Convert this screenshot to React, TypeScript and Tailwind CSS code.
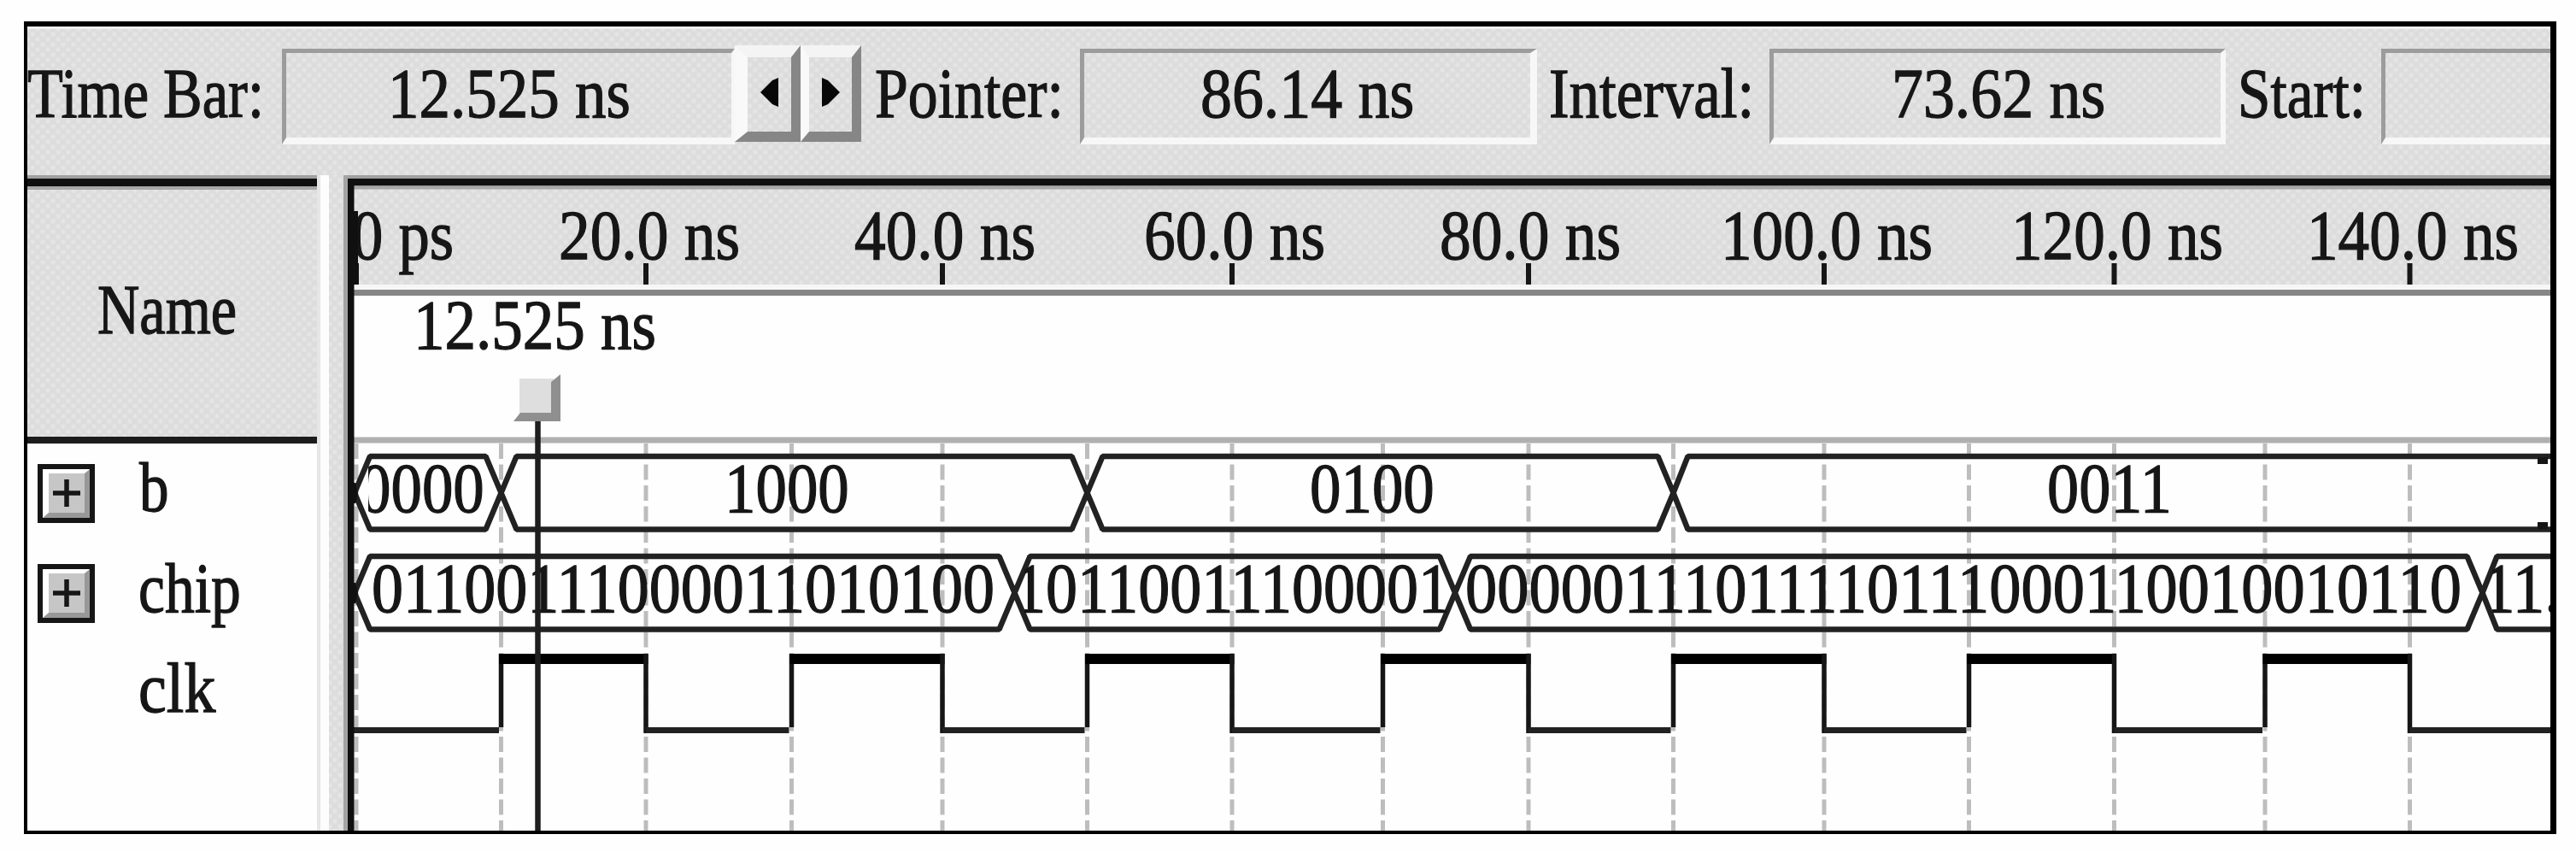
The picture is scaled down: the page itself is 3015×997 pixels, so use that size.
import React, { useLayoutEffect, useRef, useState } from "react";

const INK = "#161616";
const DIGIT = 36.45;

const GRID = [
  417, 586.5, 756, 926.5, 1103, 1272.5, 1442, 1618.5, 1789, 1958.5, 2135,
  2304.5, 2474.5, 2651, 2820.5,
];

const RULER = [
  { label: "0 ps", x: 412, width: 119, tick: 417 },
  { label: "20.0 ns", x: 654, width: 212, tick: 756 },
  { label: "40.0 ns", x: 1000, width: 212, tick: 1103 },
  { label: "60.0 ns", x: 1339, width: 212, tick: 1442 },
  { label: "80.0 ns", x: 1685, width: 212, tick: 1789 },
  { label: "100.0 ns", x: 2014, width: 248, tick: 2135 },
  { label: "120.0 ns", x: 2354, width: 248, tick: 2474.5 },
  { label: "140.0 ns", x: 2700, width: 248, tick: 2820.5 },
];

const B_EDGES = [586.5, 1272.5, 1958.5];
const B_VALUES = [
  { text: "0000", x: 421 },
  { text: "1000", x: 848 },
  { text: "0100", x: 1533 },
  { text: "0011", x: 2396 },
];

const CHIP_EDGES = [1187.5, 1703, 2905.5];
const CHIP_VALUES = [
  { text: "01100111000011010100", x: 435, width: 729 },
  { text: "10110011100001", x: 1187, width: 510 },
  { text: "00000111011110111000110010010110", x: 1715, width: 1166 },
  { text: "11.", x: 2906, width: 91 },
];

const dither =
  "bg-[#dcdcdc] bg-[radial-gradient(circle,#e6e6e6_1px,transparent_4px),radial-gradient(circle,#e6e6e6_1px,transparent_4px)] bg-[size:12px_12px] bg-[position:0_0,6px_6px]";

// Text squeezed horizontally to the given width
const Fit: React.FC<{ width: number; children: string }> = ({
  width,
  children,
}) => {
  const ref = useRef<HTMLSpanElement>(null);
  const [scale, setScale] = useState(1);

  useLayoutEffect(() => {
    if (ref.current) setScale(width / ref.current.offsetWidth);
  }, [width, children]);

  return (
    <div className="shrink-0 h-[84px]" style={{ width }}>
      <span
        ref={ref}
        className="inline-block origin-left whitespace-nowrap text-[83px] leading-[84px] text-[#161616] [-webkit-text-stroke:1.3px_#161616]"
        style={{ transform: `scaleX(${scale})` }}
      >
        {children}
      </span>
    </div>
  );
};

const Field: React.FC<{ children?: React.ReactNode; className: string }> = ({
  children,
  className,
}) => (
  <div
    className={`shrink-0 h-[112px] border-t-[5px] border-l-[5px] border-b-[8px] border-t-[#9c9c9c] border-l-[#9c9c9c] border-b-[#f7f7f7] border-r-[#f7f7f7] flex items-start pt-[5px] ${className}`}
  >
    {children}
  </div>
);

const StepButton: React.FC<{ dir: "left" | "right"; className: string }> = ({
  dir,
  className,
}) => (
  <button
    className={`shrink-0 h-[113px] border-t-[14px] border-b-[12px] border-r-[11px] border-t-[#f4f4f4] border-l-[#f9f9f9] border-r-[#868686] border-b-[#868686] flex justify-center pt-[24px] ${className}`}
  >
    <svg width="21" height="34" viewBox="0 0 21 34">
      <path
        d={dir === "left" ? "M21 0 L21 34 L14 31 L0 17 L14 3 Z" : "M0 0 L0 34 L7 31 L21 17 L7 3 Z"}
        fill="#080808"
      />
    </svg>
  </button>
);

const Expander: React.FC = () => (
  <button className="shrink-0 w-[67px] h-[69px] border-[6px] border-[#161616]">
    <span className="flex items-center justify-center w-full h-full bg-[#c6c6c6] border-t-[5px] border-l-[7px] border-b-[6px] border-r-[6px] border-t-white border-l-white border-b-[#989898] border-r-[#989898]">
      <svg width="32" height="32" viewBox="0 0 32 32">
        <path d="M0 16 H32 M16 0 V32" stroke={INK} strokeWidth="5.5" />
      </svg>
    </span>
  </button>
);

const PlotText: React.FC<{
  x: number;
  y: number;
  width: number;
  children: string;
}> = ({ x, y, width, children }) => (
  <text
    x={x}
    y={y}
    textLength={width}
    lengthAdjust="spacingAndGlyphs"
    fontSize="83"
    fill={INK}
    stroke={INK}
    strokeWidth="1.3"
  >
    {children}
  </text>
);

// Bus outline: rails between the edges and an X at every edge
const Bus: React.FC<{ top: number; bottom: number; edges: number[] }> = ({
  top,
  bottom,
  edges,
}) => {
  const mid = (top + bottom) / 2;
  const starts = [415, ...edges];
  const d = starts
    .map((s, i) => {
      const end = starts[i + 1];
      if (end === undefined) {
        return `M2990 ${top} H${s + 17} L${s} ${mid} L${s + 17} ${bottom} H2990`;
      }
      return `M${s} ${mid} L${s + 18} ${top} H${end - 18} L${end} ${mid} L${end - 18} ${bottom} H${s + 18} Z`;
    })
    .join(" ");
  return (
    <path d={d} fill="none" stroke="#222222" strokeWidth="6.5" strokeLinejoin="bevel" />
  );
};

const Plot: React.FC = () => {
  const edges = GRID.slice(1);
  return (
    <svg
      className="shrink-0 block"
      width="2578"
      height="767"
      viewBox="407 205 2578 767"
    >
      {/* time ruler */}
      {RULER.map((r) => (
        <g key={r.label}>
          <PlotText x={r.x} y={303} width={r.width}>
            {r.label}
          </PlotText>
          <rect x={r.tick - 3} y="308" width="6" height="25" fill={INK} />
        </g>
      ))}
      <rect x="407" y="333" width="2578" height="6" fill="#f6f6f6" />
      <rect x="407" y="346" width="2578" height="626" fill="#fefefe" />
      <rect x="407" y="339" width="2578" height="7" fill="#868686" />
      <rect x="407" y="511.5" width="2578" height="7" fill="#b0b0b0" />

      {/* grid */}
      {GRID.map((x) => (
        <line
          key={x}
          x1={x}
          x2={x}
          y1="519"
          y2="972"
          stroke="#bdbdbd"
          strokeWidth="5"
          strokeDasharray="18 6.5"
        />
      ))}

      {/* b */}
      <Bus top={534} bottom={619.5} edges={B_EDGES} />
      <clipPath id="bus-start">
        <rect x="431" y="530" width="2554" height="90" />
      </clipPath>
      <g clipPath="url(#bus-start)">
        {B_VALUES.map((v) => (
          <PlotText key={v.text} x={v.x} y={599} width={v.text.length * DIGIT}>
            {v.text}
          </PlotText>
        ))}
      </g>
      <rect x="2970" y="535" width="12" height="8" fill={INK} />
      <rect x="2970" y="611" width="12" height="8" fill={INK} />

      {/* chip */}
      <Bus top={651} bottom={736.5} edges={CHIP_EDGES} />
      <clipPath id="chip-values">
        <path d="M430 640 H1187 V740 H430 Z M1199 640 H2900 V740 H1199 Z M2917 640 H2985 V740 H2917 Z" />
      </clipPath>
      <g clipPath="url(#chip-values)">
        {CHIP_VALUES.map((v) => (
          <PlotText key={v.text} x={v.x} y={716} width={v.width}>
            {v.text}
          </PlotText>
        ))}
      </g>

      {/* clk */}
      <path d="M412 854.5 H584" stroke="#222222" strokeWidth="7" />
      {edges.map((x, i) => {
        const next = edges[i + 1] ?? 2990;
        return i % 2 === 0 ? (
          <g key={x}>
            <path d={`M${x} 765 V851`} stroke={INK} strokeWidth="5.5" />
            <rect x={x - 2.5} y="765" width={next - x + 5} height="12" fill="#000" />
          </g>
        ) : (
          <g key={x}>
            <path d={`M${x} 765 V858`} stroke={INK} strokeWidth="5.5" />
            <path d={`M${x} 854.5 H${next - 3}`} stroke="#222222" strokeWidth="7" />
          </g>
        );
      })}

      {/* time bar marker */}
      <PlotText x={484} y={408} width={284}>
        12.525 ns
      </PlotText>
      <path d="M629.5 490 V972" stroke="#1e1e1e" strokeWidth="6.5" />
      <rect x="608" y="443" width="40" height="42" fill="#dedede" />
      <path d="M656 438 V493 H601 L609 483 H645 V447 Z" fill="#8f8f8f" />

      {/* sunken edge of the pane */}
      <rect x="407" y="209" width="2578" height="8.5" fill="#101010" />
      <rect x="407" y="205" width="2578" height="4" fill="#a0a0a0" />
      <rect x="414" y="217.5" width="2571" height="4" fill="#a8a8a8" />
      <rect x="407" y="209" width="7.5" height="763" fill="#101010" />
      <rect x="413" y="247" width="6" height="86" fill="#101010" />
      <path d="M412 565 H416 L419 577 L416 589 H412 Z" fill="#101010" />
      <path d="M412 682 H416 L419 694 L416 706 H412 Z" fill="#101010" />
    </svg>
  );
};

const App: React.FC = () => {
  return (
    <div className="w-[3015px] h-[997px] bg-[#fefefe] overflow-hidden pl-[28px] pt-[25px] font-['Liberation_Serif',serif]">
      <div className="w-[2964px] h-[951px] border-black border-l-4 border-t-[6px] border-r-[7px] border-b-4 overflow-hidden flex flex-col">
        {/* toolbar */}
        <div
          className={`h-[174px] shrink-0 flex items-start pt-[23px] border-t-[3px] border-t-[#f0f0f0] overflow-hidden ${dither}`}
        >
          <div className="pt-[10px] shrink-0 w-[298px]">
            <Fit width={277}>Time Bar:</Fit>
          </div>
          <Field className="w-[530px] border-r-[4px] pl-[119px]">
            <Fit width={284}>12.525 ns</Fit>
          </Field>
          <div className="flex shrink-0 -mt-[4px]">
            <StepButton dir="left" className="w-[77px] border-l-[15px]" />
            <StepButton dir="right" className="w-[71px] border-l-[10px]" />
          </div>
          <div className="pt-[10px] shrink-0 w-[256px] pl-[16px]">
            <Fit width={221}>Pointer:</Fit>
          </div>
          <Field className="w-[535px] border-r-[8px] pl-[136px]">
            <Fit width={250}>86.14 ns</Fit>
          </Field>
          <div className="pt-[10px] shrink-0 w-[272px] pl-[14px]">
            <Fit width={240}>Interval:</Fit>
          </div>
          <Field className="w-[534px] border-r-[6px] pl-[138px]">
            <Fit width={250}>73.62 ns</Fit>
          </Field>
          <div className="pt-[10px] shrink-0 w-[182px] pl-[14px]">
            <Fit width={150}>Start:</Fit>
          </div>
          <Field className="w-[300px]" />
        </div>

        <div className={`flex h-[767px] shrink-0 ${dither}`}>
          {/* signal names */}
          <div className="w-[339px] shrink-0 flex flex-col">
            <div className="h-[4px] shrink-0 bg-[#a0a0a0]" />
            <div className="h-[310px] shrink-0 border-t-[9px] border-t-[#101010] border-b-[8px] border-b-[#1c1c1c]">
              <div className="h-[4px] bg-[#a8a8a8]" />
              <div className="pt-[98px] pl-[82px]">
                <Fit width={163}>Name</Fit>
              </div>
            </div>
            <div className="grow bg-[#fefefe] pl-[12px]">
              <div className="h-[117px] flex items-start pt-[24px]">
                <Expander />
                <div className="pl-[52px] -mt-[15px]">
                  <Fit width={35}>b</Fit>
                </div>
              </div>
              <div className="h-[117px] flex items-start pt-[24px]">
                <Expander />
                <div className="pl-[51px] -mt-[14px]">
                  <Fit width={120}>chip</Fit>
                </div>
              </div>
              <div className="h-[117px] flex items-start pt-[10px] pl-[118px]">
                <Fit width={90}>clk</Fit>
              </div>
            </div>
          </div>

          {/* splitter */}
          <div className="w-[36px] shrink-0 flex justify-between">
            <div className="w-[14px] border-l-[4px] border-l-[#e6e6e6] bg-[#fdfdfd]" />
            <div className="w-[5px] bg-[#a4a4a4]" />
          </div>

          <Plot />
        </div>
      </div>
    </div>
  );
};

export default App;
